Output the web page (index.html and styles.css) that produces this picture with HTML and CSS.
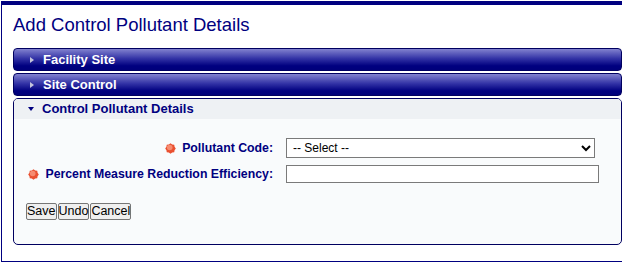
FILE: index.html
```html
<!DOCTYPE html>
<html lang="en">
<head>
  <meta charset="UTF-8">
  <title>Add Control Pollutant Details</title>
  <link rel="stylesheet" href="styles.css">
</head>
<body>
  <div class="page">
    <h1 class="title">Add Control Pollutant Details</h1>
    <div class="panel">
      <div class="bar"><span class="arrow-right"></span>Facility Site</div>
      <div class="bar"><span class="arrow-right"></span>Site Control</div>
      <div class="section">
        <div class="section-head"><span class="arrow-down"></span>Control Pollutant Details</div>
        <div class="section-body">
          <div class="form-grid">
            <label class="field-label">
              <svg class="req" viewBox="0 0 11 11" width="11" height="11"><polygon points="10.8,5.5 9.57,7.18 9.25,9.25 7.18,9.57 5.5,10.8 3.82,9.57 1.75,9.25 1.43,7.18 0.2,5.5 1.43,3.82 1.75,1.75 3.82,1.43 5.5,0.2 7.18,1.43 9.25,1.75 9.57,3.82" fill="#ea5030"/><circle cx="4.7" cy="4.5" r="2.8" fill="#fa9f86" opacity="0.75"/></svg>Pollutant Code:
            </label>
            <select class="field-select"><option>-- Select --</option></select>
            <label class="field-label">
              <svg class="req" viewBox="0 0 11 11" width="11" height="11"><polygon points="10.8,5.5 9.57,7.18 9.25,9.25 7.18,9.57 5.5,10.8 3.82,9.57 1.75,9.25 1.43,7.18 0.2,5.5 1.43,3.82 1.75,1.75 3.82,1.43 5.5,0.2 7.18,1.43 9.25,1.75 9.57,3.82" fill="#ea5030"/><circle cx="4.7" cy="4.5" r="2.8" fill="#fa9f86" opacity="0.75"/></svg>Percent Measure Reduction Efficiency:
            </label>
            <input type="text" class="field-input">
          </div>
          <div class="actions"><button>Save</button><button>Undo</button><button>Cancel</button></div>
        </div>
      </div>
    </div>
  </div>
</body>
</html>
```
FILE: styles.css
```css
body {
  margin: 0;
  font-family: 'Liberation Sans', Arial, sans-serif;
  background: #fff;
  overflow: hidden;
}

.page {
  margin: 1px 0 0 1px;
  width: 700px;
  padding: 0 0 16px 11px;
  border-top: 4px solid #000080;
  border-left: 1px solid #000080;
  border-bottom: 1px solid #000080;
}

.title {
  margin: 8px 0 11px;
  font-size: 18.5px;
  line-height: 24px;
  font-weight: normal;
  color: #000080;
}

.panel {
  width: 609px;
}

.bar {
  height: 21px;
  line-height: 21px;
  margin-bottom: 2px;
  padding-left: 16px;
  border: 1px solid #000060;
  border-radius: 4px;
  background: linear-gradient(#8282cf, #3333a6 45%, #000080 80%, #00007a);
  color: #fff;
  font-size: 13px;
  font-weight: bold;
  display: flex;
  align-items: center;
}

.arrow-right {
  width: 0;
  height: 0;
  border-left: 4px solid #c4c4dc;
  border-top: 3.5px solid transparent;
  border-bottom: 3.5px solid transparent;
  margin-right: 9px;
}

.section {
  border: 1px solid #000060;
  border-radius: 5px;
  background: #f9fbfc;
  overflow: hidden;
}

.section-head {
  height: 20px;
  line-height: 20px;
  padding-left: 14px;
  background: #eef1f4;
  color: #000080;
  font-size: 13px;
  font-weight: bold;
  display: flex;
  align-items: center;
}

.arrow-down {
  width: 0;
  height: 0;
  border-top: 4px solid #000080;
  border-left: 3.5px solid transparent;
  border-right: 3.5px solid transparent;
  margin-right: 8px;
}

.section-body {
  padding: 19px 0 24px 12px;
}

.form-grid {
  display: grid;
  grid-template-columns: 247px auto;
  column-gap: 13px;
  row-gap: 7px;
  align-items: center;
}

.field-label {
  display: flex;
  align-items: center;
  justify-content: flex-end;
  color: #000080;
  font-size: 12.3px;
  font-weight: bold;
}

.req {
  margin-right: 6px;
}

.field-select {
  width: 309px;
  height: 20px;
  box-sizing: border-box;
  border: 1px solid #7a7a7a;
  border-radius: 0;
  background: #fff;
  font-family: 'Liberation Sans', Arial, sans-serif;
  font-size: 12px;
  color: #000;
  padding: 0 2px;
}

.field-input {
  width: 313px;
  height: 18px;
  box-sizing: border-box;
  border: 1px solid #7a7a7a;
  background: #fff;
  margin: 0;
  padding: 0 2px;
}

.actions {
  margin-top: 20px;
  display: flex;
  gap: 1px;
}

.actions button {
  height: 17px;
  padding: 0;
  margin: 0;
  border: 1px solid #767676;
  border-radius: 2px;
  background: #efefef;
  font-family: 'Liberation Sans', Arial, sans-serif;
  font-size: 12.5px;
  color: #000;
  line-height: 15px;
}
```
